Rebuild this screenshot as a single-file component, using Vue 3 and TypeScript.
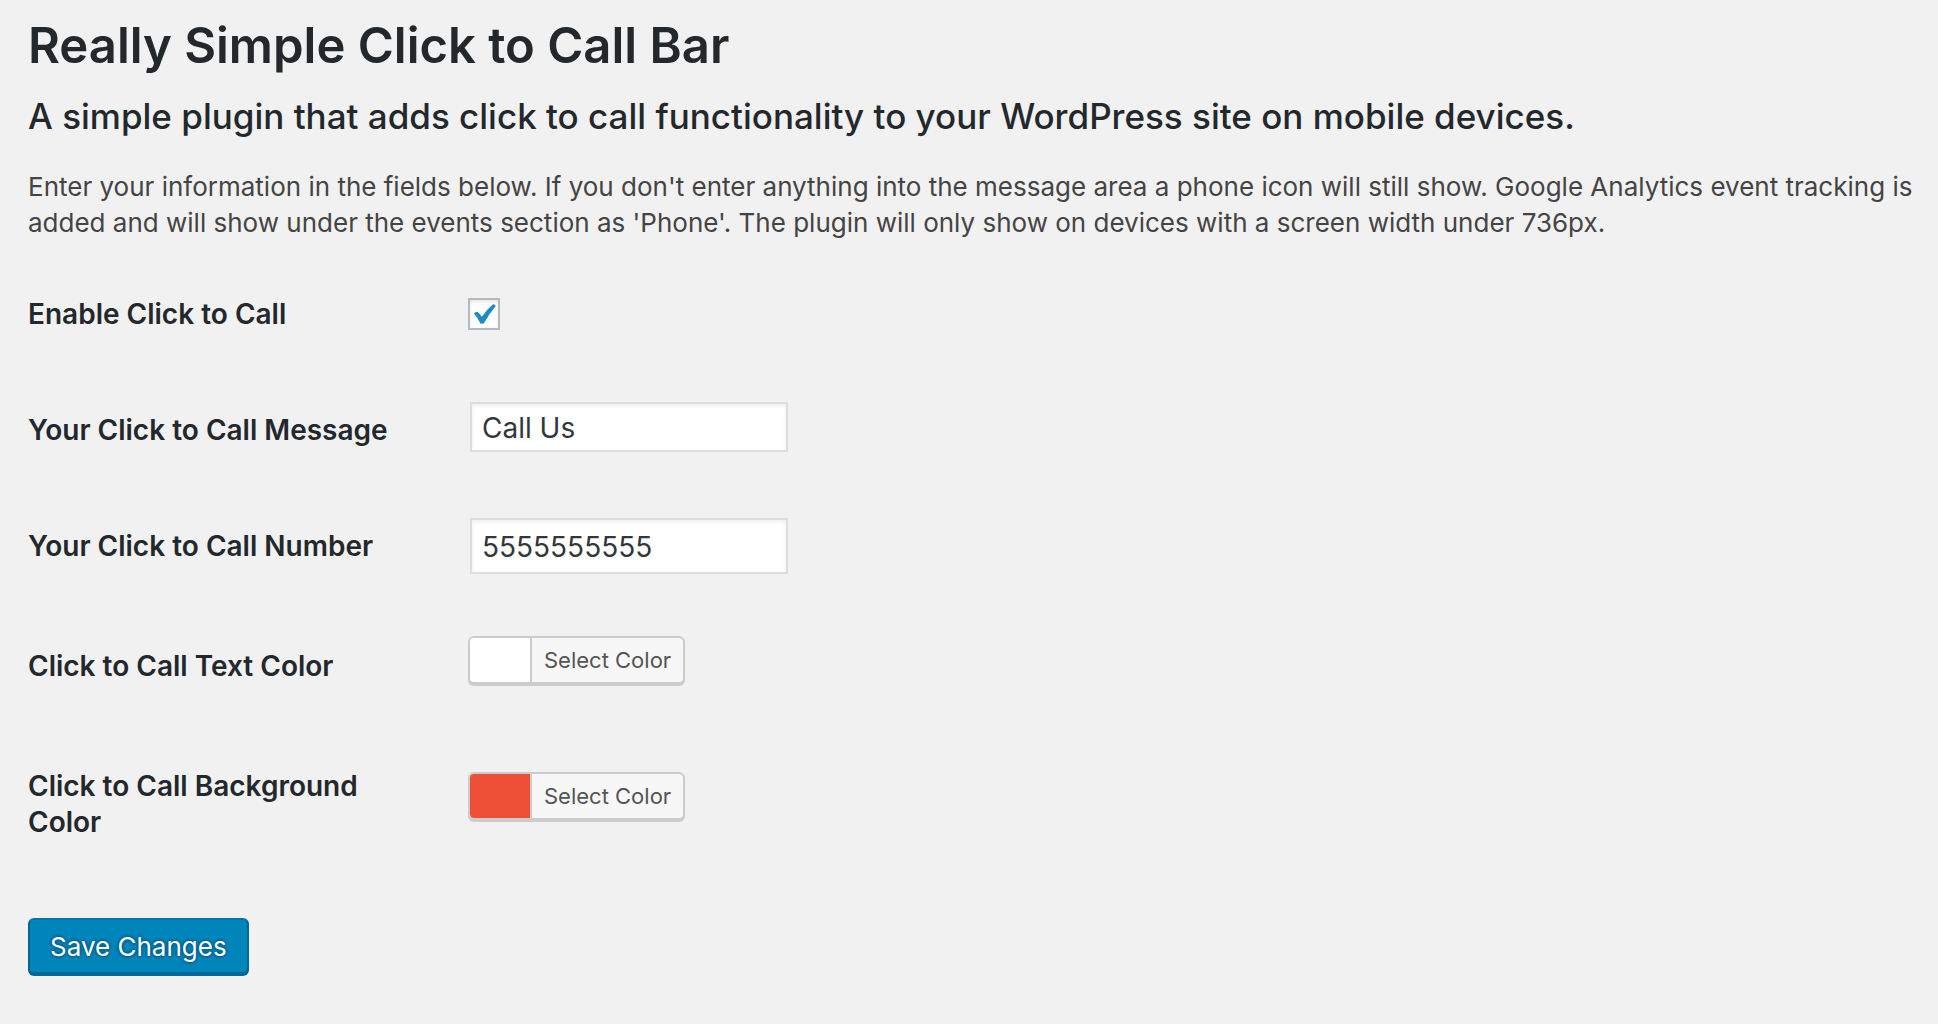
<script setup lang="ts">
import { ref } from 'vue'

const enabled = ref(true)
const message = ref('Call Us')
const phone = ref('5555555555')
const textColor = ref('#ffffff')
const backgroundColor = ref('#ed5037')
</script>

<template>
  <main class="wrap">
    <h1 class="title">Really Simple Click to Call Bar</h1>
    <h2 class="subtitle">A simple plugin that adds click to call functionality to your WordPress site on mobile devices.</h2>
    <p class="intro">
      Enter your information in the fields below. If you don't enter anything into the message area a phone icon will
      still show. Google Analytics event tracking is added and will show under the events section as 'Phone'. The plugin
      will only show on devices with a screen width under 736px.
    </p>

    <form class="settings" @submit.prevent>
      <div class="row">
        <label class="row-label" for="enable">Enable Click to Call</label>
        <div class="row-control row-control--check">
          <span class="check">
            <input id="enable" v-model="enabled" class="check-input" type="checkbox" />
            <svg v-if="enabled" class="check-mark" viewBox="0 0 32 32" aria-hidden="true">
              <path d="M6 15.6 Q7.2 14 9.2 13.8 Q11.8 15.6 13.9 18.8 Q18.4 11.6 25 6.2 Q27 6.4 27.8 8 Q21.2 15.6 15.8 25.6 L12.6 25.8 Q9.8 20 6 15.6 Z" />
            </svg>
          </span>
        </div>
      </div>

      <div class="row">
        <label class="row-label" for="message">Your Click to Call Message</label>
        <div class="row-control">
          <input id="message" v-model="message" class="field" type="text" />
        </div>
      </div>

      <div class="row">
        <label class="row-label" for="phone">Your Click to Call Number</label>
        <div class="row-control">
          <input id="phone" v-model="phone" class="field field--number" type="tel" />
        </div>
      </div>

      <div class="row">
        <label class="row-label" for="text-color">Click to Call Text Color</label>
        <div class="row-control">
          <button id="text-color" class="picker" type="button">
            <span class="picker-swatch" :style="{ backgroundColor: textColor }"></span>
            <span class="picker-text">Select Color</span>
          </button>
        </div>
      </div>

      <div class="row">
        <label class="row-label" for="background-color">Click to Call Background Color</label>
        <div class="row-control row-control--tall">
          <button id="background-color" class="picker" type="button">
            <span class="picker-swatch" :style="{ backgroundColor }"></span>
            <span class="picker-text">Select Color</span>
          </button>
        </div>
      </div>

      <button class="save" type="submit">Save Changes</button>
    </form>
  </main>
</template>

<style>
body {
  margin: 0;
  background: #f1f1f1;
}
</style>

<style scoped>
.wrap {
  padding: 16px 20px 44px 28px;
  color: #444;
  font-family: Inter, "Open Sans", sans-serif;
  font-size: 26px;
  line-height: 36px;
}

.title {
  margin: 0;
  color: #23282d;
  font-size: 49px;
  font-weight: 600;
  line-height: 60px;
}

.subtitle {
  margin: 20px 0 33px;
  color: #23282d;
  font-size: 35px;
  font-weight: 500;
  line-height: 40px;
}

.intro {
  margin: 0 0 15px;
}

.row {
  display: flex;
  align-items: flex-start;
}

.row-label {
  flex: none;
  box-sizing: border-box;
  width: 420px;
  padding: 40px 20px 40px 0;
  color: #23282d;
  font-size: 28px;
  font-weight: 600;
}

.row-control {
  padding: 28px 20px 32px;
}

.row-control--check {
  padding-top: 42px;
}

.row-control--tall {
  padding-top: 44px;
}

.check {
  position: relative;
  display: block;
  width: 32px;
  height: 32px;
}

.check-input {
  appearance: none;
  display: block;
  box-sizing: border-box;
  width: 32px;
  height: 32px;
  margin: 0;
  border: 2px solid #b4b9be;
  background: #fff;
  box-shadow: inset 0 2px 4px rgba(0, 0, 0, 0.1);
}

.check-mark {
  position: absolute;
  inset: 0;
  fill: #1e8cbe;
  pointer-events: none;
}

.field {
  display: block;
  box-sizing: border-box;
  width: 318px;
  height: 50px;
  margin: 2px;
  padding: 2px 10px 0;
  border: 2px solid #ddd;
  border-radius: 0;
  background: #fff;
  box-shadow: inset 0 2px 4px rgba(0, 0, 0, 0.07);
  color: #32373c;
  font: inherit;
  font-size: 28px;
}

.field--number {
  height: 56px;
}

.picker {
  display: flex;
  box-sizing: border-box;
  height: 48px;
  margin: 0 0 12px;
  padding: 0;
  overflow: hidden;
  border: 2px solid #ccc;
  border-radius: 6px;
  background: #f7f7f7;
  box-shadow: 0 2px 0 #ccc;
  color: #555;
  font: inherit;
  font-size: 22px;
  line-height: 44px;
}

.picker-swatch {
  width: 60px;
}

.picker-text {
  padding: 0 12px;
  border-left: 2px solid #ccc;
}

.save {
  display: block;
  box-sizing: border-box;
  height: 56px;
  margin: 38px 0 0;
  padding: 2px 20px 0;
  border: 2px solid;
  border-color: #0073aa #006799 #006799;
  border-radius: 6px;
  background: #0085ba;
  box-shadow: 0 2px 0 #006799;
  color: #fff;
  font: inherit;
  line-height: 50px;
  text-shadow: 0 -2px 2px #006799, 2px 0 2px #006799, 0 2px 2px #006799, -2px 0 2px #006799;
}
</style>
